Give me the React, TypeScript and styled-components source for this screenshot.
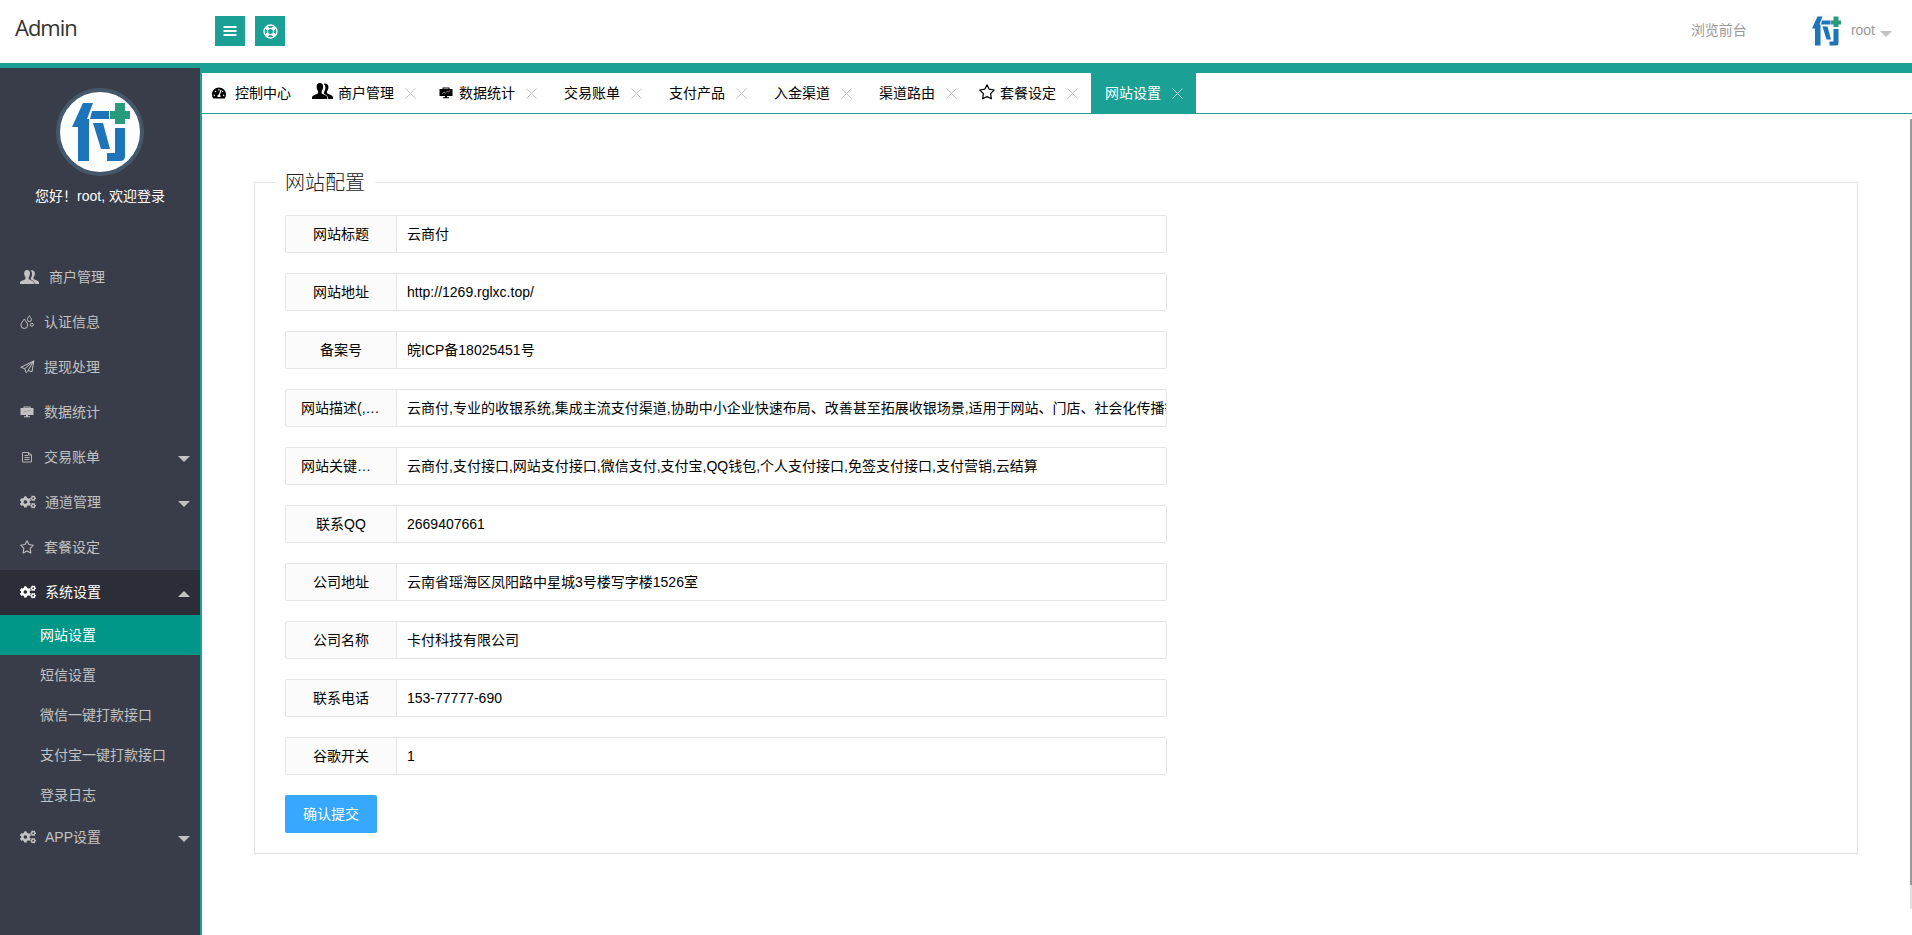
import React from "react";
import styled, { createGlobalStyle } from "styled-components";
import { FaCogs, FaTachometerAlt } from "react-icons/fa";

const teal = "#1aa094";

const Global = createGlobalStyle`
  *, *::before, *::after { box-sizing: border-box; }
  body { margin: 0; background: #fff; color: #000; overflow: hidden;
    font: 14px/24px "Liberation Sans", "Noto Sans CJK SC", sans-serif; }
`;

const Page = styled.div`
  display: flex;
  flex-direction: column;
  height: 935px;
`;

const Header = styled.header`
  display: flex;
  flex: none;
  height: 68px;
  border-bottom: 5px solid ${teal};
`;

const Brand = styled.div`
  width: 200px;
  padding-left: 15px;
  font: 22px/55px "Open Sans", sans-serif;
  color: #333;
  letter-spacing: -1px;
`;

const HeaderTools = styled.div`
  display: flex;
  gap: 10px;
  padding: 16px 0 0 15px;
`;

const ToolButton = styled.button`
  display: grid;
  place-items: center;
  width: 30px;
  height: 30px;
  padding: 0;
  border: 0;
  background: ${teal};
  color: #fff;
`;

const HeaderNav = styled.nav`
  display: flex;
  margin-left: auto;
  padding-right: 20px;
  color: #999;
  line-height: 60px;
`;

const FrontLink = styled.span`
  margin-right: 61px;
`;

const Account = styled.span`
  display: flex;
  align-items: center;
  height: 60px;
`;

const HeaderAvatar = styled.span`
  display: grid;
  place-items: center;
  width: 35px;
  height: 35px;
  margin-right: 8px;
  padding: 2px 0 0 4px;
  border-radius: 50%;
  background: #fafbfd;
`;

const Triangle = styled.i<{ $up?: boolean }>`
  width: 0;
  height: 0;
  border: 6px solid transparent;
  border-width: ${(p) => (p.$up ? "0 6px 6px" : "6px 6px 0")};
  border-${(p) => (p.$up ? "bottom" : "top")}-color: #c2c2c2;
`;

const AccountArrow = styled(Triangle)`
  margin: 8px 0 0 5px;
`;

const Main = styled.div`
  display: flex;
  flex: 1;
  min-height: 0;
`;

const Sidebar = styled.aside`
  width: 200px;
  flex: none;
  background: #393d49;
  color: #c2c2c2;
`;

const Profile = styled.div`
  display: flex;
  flex-direction: column;
  align-items: center;
  height: 187px;
  padding-top: 20px;
  color: #fff;
`;

const ProfileAvatar = styled.div`
  display: grid;
  place-items: center;
  width: 88px;
  height: 88px;
  padding-left: 3px;
  border: 4px solid #44576b;
  border-radius: 50%;
  background: #fcfdfe;
`;

const Greeting = styled.p`
  margin: 8px 0 0;
`;

const MenuItem = styled.div<{ $open?: boolean }>`
  display: flex;
  align-items: center;
  height: 45px;
  padding: 0 10px 2px 20px;
  background: ${(p) => (p.$open ? "#2b2e37" : "transparent")};
  color: ${(p) => (p.$open ? "#fff" : "#c2c2c2")};
`;

const MenuIcon = styled.span<{ $w: number }>`
  display: flex;
  align-items: center;
  flex: none;
  width: ${(p) => p.$w}px;
`;

const MenuArrow = styled(Triangle)`
  margin: 4px 0 0 auto;
`;

const SubItem = styled.div<{ $active?: boolean }>`
  height: 40px;
  padding-left: 40px;
  line-height: 40px;
  background: ${(p) => (p.$active ? "#009688" : "transparent")};
  color: ${(p) => (p.$active ? "#fff" : "#c2c2c2")};
`;

const Content = styled.main`
  display: flex;
  flex-direction: column;
  flex: 1;
  min-width: 0;
  border-left: 2px solid ${teal};
`;

const TabBar = styled.div`
  display: flex;
  flex: none;
  height: 46px;
  border-top: 5px solid ${teal};
  border-bottom: 1px solid ${teal};
`;

const Tab = styled.div<{ $w: number; $active?: boolean; $pad?: number }>`
  display: flex;
  align-items: center;
  width: ${(p) => p.$w}px;
  padding-left: ${(p) => p.$pad ?? 15}px;
  background: ${(p) => (p.$active ? teal : "transparent")};
  color: ${(p) => (p.$active ? "#fff" : "#000")};
`;

const TabIcon = styled.span<{ $w: number; $lift?: number }>`
  display: flex;
  flex: none;
  width: ${(p) => p.$w}px;
  padding-bottom: ${(p) => p.$lift ?? 0}px;
`;

const CloseMark = styled.svg`
  margin-left: 11px;
  flex: none;
`;

const Scroller = styled.div`
  display: flex;
  flex: 1;
  justify-content: space-between;
  padding: 5px 0 0 52px;
`;

const Panel = styled.fieldset`
  width: 1604px;
  height: 685px;
  margin: 50px 0 0;
  padding: 20px 30px 0;
  border: 1px solid #e2e2e2;
`;

const PanelTitle = styled.legend`
  margin-left: -10px;
  padding: 2px 10px 0;
  font-size: 20px;
  font-weight: 300;
  line-height: 24px;
  color: #222;
`;

const Form = styled.div`
  display: flex;
  flex-direction: column;
  align-items: flex-start;
  gap: 20px;
`;

const Field = styled.div`
  display: flex;
  width: 882px;
  height: 38px;
  border: 1px solid #e6e6e6;
  border-radius: 2px;
  line-height: 36px;
`;

const Label = styled.label`
  flex: none;
  width: 111px;
  padding: 0 15px;
  overflow: hidden;
  border-right: 1px solid #e6e6e6;
  background: #fbfbfb;
  text-align: center;
  text-overflow: ellipsis;
  white-space: nowrap;
`;

const Value = styled.div`
  flex: 1;
  min-width: 0;
  padding-left: 10px;
  overflow: hidden;
  white-space: nowrap;
`;

const Submit = styled.button`
  width: 92px;
  height: 38px;
  padding: 0;
  border: 0;
  border-radius: 2px;
  background: #36a8ff;
  color: #fff;
  font: inherit;
`;

const ScrollTrack = styled.div`
  width: 2px;
  height: 790px;
  background: #e1e1e1;
`;

const ScrollThumb = styled.div`
  height: 766px;
  background: #999;
`;

const Logo = ({ size }: { size: number }) => (
  <svg width={size} height={size} viewBox="0 0 60 60">
    <g fill="#1e74b8">
      <path d="M11 1H21L15 17H17V59H6V25H0Z" />
      <path d="M20 9H37V17H18Z" />
      <path d="M21 21H31L38 47H29Z" />
      <path d="M43 26H53V54Q53 59 48 59H35V51H43Z" />
    </g>
    <path fill="#289b7d" d="M43 1H53V9H58V17H53V22H43V17H38V9H43Z" />
  </svg>
);

const BarsIcon = () => (
  <svg width="14" height="10" viewBox="0 0 14 10" fill="currentColor">
    <path d="M.5 0h13v2H.5ZM.5 4h13v2H.5ZM.5 8h13v2H.5Z" />
  </svg>
);

const LifeRingIcon = () => (
  <svg width="15" height="15" viewBox="0 0 15 15" fill="none" stroke="currentColor">
    <circle cx="7.5" cy="7.5" r="6.5" strokeWidth="1.3" />
    <circle cx="7.5" cy="7.5" r="3.1" strokeWidth="1.2" />
    <path d="m3 3 2.3 2.3M12 3 9.7 5.3M3 12l2.3-2.3M12 12 9.7 9.7" strokeWidth="3.4" />
  </svg>
);

const UsersIcon = ({ w, h }: { w: number; h: number }) => (
  <svg width={w} height={h} viewBox="0 0 20 16" preserveAspectRatio="none" fill="currentColor">
    <path d="M11.2.9C12.2.2 13.2.3 14 .9c1.5.7 1.8 2 1.6 4-.1 1.6-.8 2.7-1.4 3.3v1.7c1 1.3 5.8 2 5.8 4.4V16h-4.6c-.1-3-1.6-4-4-5.2V9c1.2-1.4 1.8-4.1 1-6.4-.3-.8-.6-1.3-1.2-1.7Z" />
    <path d="M4.4 4C4.3 1.7 5.4.1 7.4.1s3.4 1.6 3.2 3.9c-.1 1.8-.7 3.1-1.4 4v2.2c1.1 1.5 5.4 1.6 5.4 4.5V16H0v-1.3c0-2.9 4.6-3 5.7-4.5V8C5 7.1 4.5 5.8 4.4 4Z" />
  </svg>
);

const BoardIcon = () => (
  <svg width="14" height="12" viewBox="0 0 14 12">
    <path fill="currentColor" d="M3.5 2V.5h7V2H13.5v7H8v1.2h2v1H4v-1h2V9H.5V2Zm1 0h5v-.6h-5Z" />
    <path d="m3 6.6 2-1.6 1.3 1L8.3 4.2l.8.9 2-1.4" fill="none" stroke="#999" strokeWidth=".8" />
  </svg>
);

const StarIcon = ({ size }: { size: number }) => (
  <svg width={size} height={size} viewBox="0 0 16 16" fill="none" stroke="currentColor" strokeWidth="1.2" strokeLinejoin="round">
    <path d="m8 .8 2.2 4.4 5 .8-3.6 3.6.8 5.2L8 12.6l-4.4 2.2.8-5.2L.8 6l5-.8Z" />
  </svg>
);

const DropsIcon = () => (
  <svg width="14" height="14" viewBox="0 0 14 14" fill="none" stroke="currentColor">
    <path d="M4.3 4C3.2 6.2.9 7.8.9 10.1a3.4 3.4 0 0 0 6.8 0C7.7 7.8 5.4 6.2 4.3 4Z" />
    <path d="M9.3.7C8.7 2.1 7.4 3.1 7.4 4.6a2 2 0 0 0 4 0C11.4 3.1 9.9 2.1 9.3.7Z" />
    <circle cx="11.8" cy="9.8" r="1.5" />
  </svg>
);

const PlaneIcon = () => (
  <svg width="15" height="14" viewBox="0 0 15 14" fill="none" stroke="currentColor" strokeLinejoin="round">
    <path d="M13.8.9.8 7.3l3.9 1.4L6.2 12.8l1.8-2.3 4 1.2ZM4.7 8.7 13.8.9 8 10.5" />
  </svg>
);

const DocIcon = () => (
  <svg width="14" height="12" viewBox="0 0 14 12" fill="none" stroke="currentColor" strokeWidth=".9">
    <path d="M2.5 1.5h6l3 2.5v7h-9ZM4.5 4.5H8M4.5 6.5h5M4.5 8.5h5M8.5 1.5V4h3" />
  </svg>
);

type Item = { text: string; icon: React.ReactNode; w: number; arrow?: boolean; open?: boolean };

const menu: Item[] = [
  { text: "商户管理", icon: <UsersIcon w={19} h={14} />, w: 29 },
  { text: "认证信息", icon: <DropsIcon />, w: 24 },
  { text: "提现处理", icon: <PlaneIcon />, w: 24 },
  { text: "数据统计", icon: <BoardIcon />, w: 24 },
  { text: "交易账单", icon: <DocIcon />, w: 24, arrow: true },
  { text: "通道管理", icon: <FaCogs size={16} />, w: 25, arrow: true },
  { text: "套餐设定", icon: <StarIcon size={14} />, w: 24 },
  { text: "系统设置", icon: <FaCogs size={16} />, w: 25, arrow: true, open: true },
];

const subMenu = ["网站设置", "短信设置", "微信一键打款接口", "支付宝一键打款接口", "登录日志"];

type TabData = {
  text: string;
  w: number;
  pad?: number;
  icon?: React.ReactNode;
  iw?: number;
  lift?: number;
  fixed?: boolean;
  active?: boolean;
};

const tabs: TabData[] = [
  { text: "控制中心", w: 98, pad: 10, icon: <FaTachometerAlt size={14} />, iw: 23, fixed: true },
  { text: "商户管理", w: 124, pad: 12, icon: <UsersIcon w={21} h={16} />, iw: 26, lift: 4 },
  { text: "数据统计", w: 125, icon: <BoardIcon />, iw: 20 },
  { text: "交易账单", w: 105 },
  { text: "支付产品", w: 105 },
  { text: "入金渠道", w: 105 },
  { text: "渠道路由", w: 105 },
  { text: "套餐设定", w: 122, pad: 10, icon: <StarIcon size={16} />, iw: 21, lift: 2 },
  { text: "网站设置", w: 105, pad: 14, active: true },
];

const fields = [
  ["网站标题", "云商付"],
  ["网站地址", "http://1269.rglxc.top/"],
  ["备案号", "皖ICP备18025451号"],
  ["网站描述(,号隔开)", "云商付,专业的收银系统,集成主流支付渠道,协助中小企业快速布局、改善甚至拓展收银场景,适用于网站、门店、社会化传播等"],
  ["网站关键字(,号)", "云商付,支付接口,网站支付接口,微信支付,支付宝,QQ钱包,个人支付接口,免签支付接口,支付营销,云结算"],
  ["联系QQ", "2669407661"],
  ["公司地址", "云南省瑶海区凤阳路中星城3号楼写字楼1526室"],
  ["公司名称", "卡付科技有限公司"],
  ["联系电话", "153-77777-690"],
  ["谷歌开关", "1"],
];

const MenuRow = ({ item }: { item: Item }) => (
  <MenuItem $open={item.open}>
    <MenuIcon $w={item.w}>{item.icon}</MenuIcon>
    {item.text}
    {item.arrow && <MenuArrow $up={item.open} />}
  </MenuItem>
);

export default function App() {
  return (
    <Page>
      <Global />
      <Header>
        <Brand>Admin</Brand>
        <HeaderTools>
          <ToolButton><BarsIcon /></ToolButton>
          <ToolButton><LifeRingIcon /></ToolButton>
        </HeaderTools>
        <HeaderNav>
          <FrontLink>浏览前台</FrontLink>
          <Account>
            <HeaderAvatar><Logo size={30} /></HeaderAvatar>
            root
            <AccountArrow />
          </Account>
        </HeaderNav>
      </Header>
      <Main>
        <Sidebar>
          <Profile>
            <ProfileAvatar><Logo size={60} /></ProfileAvatar>
            <Greeting>您好！root, 欢迎登录</Greeting>
          </Profile>
          {menu.map((item) => <MenuRow key={item.text} item={item} />)}
          {subMenu.map((text, i) => <SubItem key={text} $active={i === 0}>{text}</SubItem>)}
          <MenuRow item={{ text: "APP设置", icon: <FaCogs size={16} />, w: 25, arrow: true }} />
        </Sidebar>
        <Content>
          <TabBar>
            {tabs.map((tab) => (
              <Tab key={tab.text} $w={tab.w} $pad={tab.pad} $active={tab.active}>
                {tab.icon && <TabIcon $w={tab.iw ?? 20} $lift={tab.lift}>{tab.icon}</TabIcon>}
                {tab.text}
                {!tab.fixed && (
                  <CloseMark width="11" height="11" viewBox="0 0 11 11" stroke={tab.active ? "#b5d9d5" : "#c2c2c2"}>
                    <path d="m.5.5 10 10m0-10-10 10" />
                  </CloseMark>
                )}
              </Tab>
            ))}
          </TabBar>
          <Scroller>
            <Panel>
              <PanelTitle>网站配置</PanelTitle>
              <Form>
                {fields.map(([label, value]) => (
                  <Field key={label}>
                    <Label>{label}</Label>
                    <Value>{value}</Value>
                  </Field>
                ))}
                <Submit>确认提交</Submit>
              </Form>
            </Panel>
            <ScrollTrack><ScrollThumb /></ScrollTrack>
          </Scroller>
        </Content>
      </Main>
    </Page>
  );
}
